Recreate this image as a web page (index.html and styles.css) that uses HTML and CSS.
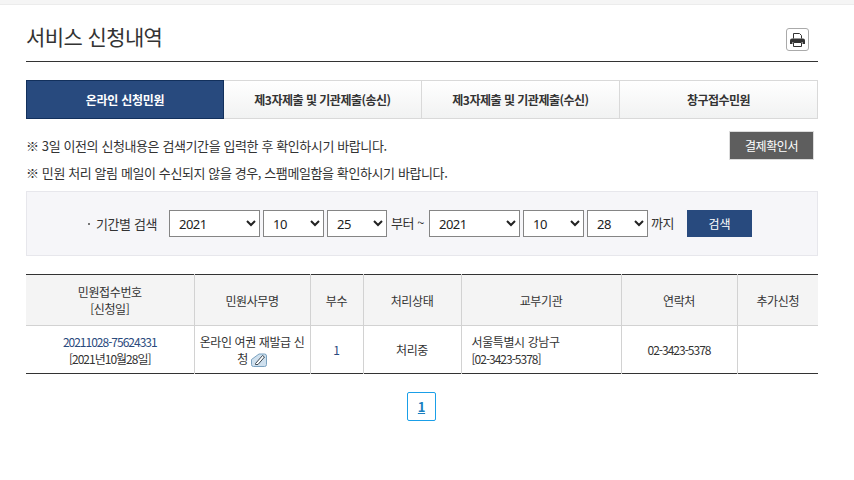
FILE: index.html
```html
<!DOCTYPE html>
<html lang="ko">
<head>
<meta charset="utf-8">
<title>서비스 신청내역</title>
<link rel="stylesheet" href="styles.css">
</head>
<body>
<div class="topband"></div>
<main class="wrap">
  <header class="head">
    <h1 class="title">서비스 신청내역</h1>
    <button class="print" type="button" aria-label="인쇄">
      <svg width="15" height="14" viewBox="0 0 15 14"><path d="M3.500 5.500V.5h6l2 2v3" fill="none" stroke="#333" stroke-width="1"/><path d="M2 5.500h11a2 2 0 0 1 2 2V11h-2.500V9h-10v2H0V7.500a2 2 0 0 1 2-2z" fill="#333"/><path d="M3.500 9.500h8v4h-8z" fill="none" stroke="#333"/></svg>
    </button>
  </header>
  <nav class="tabs">
    <a class="tab active">온라인 신청민원</a>
    <a class="tab">제3자제출 및 기관제출(송신)</a>
    <a class="tab">제3자제출 및 기관제출(수신)</a>
    <a class="tab">창구접수민원</a>
  </nav>
  <section class="notes">
    <div class="notetext">
      <p>※ 3일 이전의 신청내용은 검색기간을 입력한 후 확인하시기 바랍니다.</p>
      <p>※ 민원 처리 알림 메일이 수신되지 않을 경우, 스팸메일함을 확인하시기 바랍니다.</p>
    </div>
    <button class="confirm" type="button">결제확인서</button>
  </section>
  <form class="search">
    <span class="label">기간별 검색</span>
    <select class="sel y"><option>2021</option></select>
    <select class="sel m"><option>10</option></select>
    <select class="sel d"><option>25</option></select>
    <span class="from">부터 ~</span>
    <select class="sel y"><option>2021</option></select>
    <select class="sel m"><option>10</option></select>
    <select class="sel d2"><option>28</option></select>
    <span class="to">까지</span>
    <button class="go" type="button">검색</button>
  </form>
  <table class="list">
    <colgroup>
      <col class="c1"><col class="c2"><col class="c3"><col class="c4"><col class="c5"><col class="c6"><col class="c7">
    </colgroup>
    <thead>
      <tr><th>민원접수번호<br>[신청일]</th><th>민원사무명</th><th>부수</th><th>처리상태</th><th>교부기관</th><th>연락처</th><th>추가신청</th></tr>
    </thead>
    <tbody>
      <tr>
        <td class="tight"><span class="num">20211028-75624331</span><br>[2021년10월28일]</td>
        <td>온라인 여권 재발급 신청 <svg class="memo" width="16" height="14" viewBox="0 0 16 14"><path d="M.5 6.500 8 1h5.500A2 2 0 0 1 15.500 3v8.500a2 2 0 0 1-2 2h-11a2 2 0 0 1-2-2z" fill="#cfe0ee" stroke="#7ba2c0"/><path d="M4.500 10.500 11.500 2.500l2 1.500-6.500 7.500H4.500z" fill="#fff" stroke="#3c4852"/></svg></td>
        <td class="blue">1</td>
        <td>처리중</td>
        <td class="left">서울특별시 강남구<br><span class="tight">[02-3423-5378]</span></td>
        <td class="tight">02-3423-5378</td>
        <td></td>
      </tr>
    </tbody>
  </table>
  <div class="pager"><a class="page">1</a></div>
</main>
</body>
</html>
```
FILE: styles.css
```css
* { box-sizing: border-box; }
html, body { margin: 0; padding: 0; background: #fff; }
body {
  font-family: "Noto Sans CJK KR", "Noto Sans", sans-serif;
  font-size: 12px;
  color: #333;
  letter-spacing: -0.4px;
  height: 480px;
  overflow: hidden;
}
.topband { height: 5px; background: #f5f5f5; border-bottom: 1px solid #ececec; }
.wrap { width: 792px; margin-left: 26px; }
.head {
  height: 57px;
  border-bottom: 1px solid #333;
  display: flex;
  justify-content: space-between;
  align-items: flex-start;
  padding-top: 23px;
  padding-right: 9px;
}
.title { margin: 0; font-size: 21px; line-height: 17px; font-weight: 400; color: #333; letter-spacing: -0.6px; }
.print {
  width: 23px; height: 23px;
  padding: 0;
  background: #fff;
  border: 1px solid #aaa;
  border-radius: 3px;
  display: flex;
  align-items: center;
  justify-content: center;
}
.tabs {
  margin-top: 18px;
  display: flex;
  height: 39px;
  border: 1px solid #d9d9d9;
  background: linear-gradient(#fff, #f1f2f2);
}
.tab {
  flex: 1;
  display: flex;
  align-items: center;
  justify-content: center;
  font-weight: 700;
  font-size: 12px;
  color: #333;
  border-left: 1px solid #d9d9d9;
  letter-spacing: -0.5px;
}
.tab.active {
  flex: 0 0 198px;
  margin: -1px 0 -1px -1px;
  background: #284a7e;
  border: 1px solid #12305c;
  color: #fff;
  letter-spacing: -0.25px;
}
.tab:nth-child(2) { border-left: 0; }
.notes {
  display: flex;
  justify-content: space-between;
  align-items: flex-start;
  padding-right: 4px;
  margin-top: 12px;
  height: 60px;
}
.notetext p { margin: 0 0 7px; line-height: 20px; font-size: 13px; }
.notetext p:first-child { margin-top: 5px; }
.confirm {
  width: 85px; height: 29px;
  background: #5e5e5e;
  border: 1px solid #dcdcdc;
  color: #fff;
  font: inherit;
  font-size: 12px;
  letter-spacing: -0.4px;
  padding: 0;
}
.search {
  height: 65px;
  background: #f6f6f9;
  border: 1px solid #e7e7ec;
  display: flex;
  align-items: center;
  padding-left: 61px;
  font-size: 13px;
}
.label { width: 81px; position: relative; padding-left: 8px; }
.label::before {
  content: "";
  position: absolute; left: 0; top: 9px;
  width: 2px; height: 2px; background: #777;
}
.sel {
  height: 27px;
  margin-right: 3px;
  border: 1px solid #858585;
  border-radius: 0;
  background-color: #fff;
  font-family: "Noto Sans", sans-serif;
  font-size: 13px;
  letter-spacing: -0.5px;
  color: #222;
  padding-left: 5px;
}
.y { width: 91px; }
.m { width: 61px; }
.d { width: 60px; }
.d2 { width: 61px; }
.from { margin-left: 1px; width: 38px; transform: translateY(-1px); white-space: nowrap; }
.to { width: 36px; transform: translateY(-1px); }
.go {
  width: 65px; height: 27px;
  background: #284a7e;
  border: 0;
  color: #fff;
  font: inherit;
  font-size: 12px;
}
.list {
  margin-top: 18px;
  width: 792px;
  table-layout: fixed;
  border-collapse: collapse;
  border-top: 1px solid #333;
  border-bottom: 1px solid #333;
  font-size: 12px;
  line-height: 17px;
  text-align: center;
}
.c1 { width: 168px; } .c2 { width: 116px; } .c3 { width: 53px; } .c4 { width: 98px; }
.c5 { width: 160px; } .c6 { width: 116px; } .c7 { width: 81px; }
.list th, .list td { border-left: 1px solid #d2d2d2; padding: 0 4px; font-weight: 400; }
.list th:first-child, .list td:first-child { border-left: 0; }
.list th { height: 51px; background: #f4f4f4; border-bottom: 1px solid #d2d2d2; }
.list td { height: 48px; }
.list td.left { text-align: left; padding-left: 10px; }
.list .tight { letter-spacing: -1px; }
.num, .blue { color: #2a4a7d; }
.memo { vertical-align: -3px; }
.pager { margin-top: 18px; display: flex; justify-content: center; padding-right: 1px; }
.page {
  width: 29px; height: 29px;
  border: 1px solid #1a9fe8;
  border-radius: 2px;
  display: flex; align-items: center; justify-content: center;
  font-weight: 700;
  font-size: 13px;
  color: #1a7fc0;
  text-decoration: underline;
}
```
